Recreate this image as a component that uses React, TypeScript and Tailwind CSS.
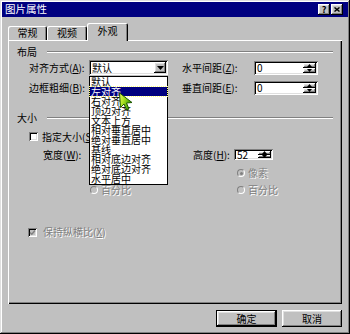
import React from "react";

// Win98-style bevels
const RAISED =
  "shadow-[inset_-1px_-1px_0_#000,inset_1px_1px_0_#fff,inset_-2px_-2px_0_#808080,inset_2px_2px_0_#dfdfdf]";
const SUNKEN =
  "shadow-[inset_1px_1px_0_#808080,inset_-1px_-1px_0_#fff,inset_2px_2px_0_#000,inset_-2px_-2px_0_#dfdfdf]";
const DISABLED = "text-[#808080] [text-shadow:1px_1px_0_#fff]";

const ALIGN_OPTIONS = [
  "默认",
  "左对齐",
  "右对齐",
  "顶边对齐",
  "文本上方",
  "相对垂直居中",
  "绝对垂直居中",
  "基线",
  "相对底边对齐",
  "绝对底边对齐",
  "水平居中",
];

function GroupHeader({ label }: { label: string }) {
  return (
    <div className="flex h-[12px] items-center pl-[9px] pr-[9px]">
      <span className="leading-none">{label}</span>
      <div className="ml-[10px] h-[2px] flex-1 border-t border-b border-t-[#808080] border-b-white" />
    </div>
  );
}

function SpinArrow({ up }: { up?: boolean }) {
  return (
    <div className={`flex w-[13px] flex-1 items-center justify-center bg-[#c0c0c0] ${RAISED}`}>
      <svg width="5" height="3" viewBox="0 0 5 3">
        <path d={up ? "M0 3h5L2.5 0z" : "M0 0h5L2.5 3z"} fill="#000" />
      </svg>
    </div>
  );
}

function SpinBox({ value, className }: { value: string; className: string }) {
  return (
    <div className={`flex items-center bg-white ${SUNKEN} ${className}`}>
      <span className="flex-1 pl-[3px] leading-none">{value}</span>
      <div className="flex h-full flex-col py-[2px] pr-[2px]">
        <SpinArrow up />
        <SpinArrow />
      </div>
    </div>
  );
}

function CheckBox({ checked, disabled }: { checked?: boolean; disabled?: boolean }) {
  return (
    <div
      className={`flex h-[9px] w-[9px] shrink-0 items-center justify-center ${SUNKEN} ${
        disabled ? "bg-[#c0c0c0]" : "bg-white"
      }`}
    >
      {checked && (
        <svg width="7" height="7" viewBox="0 0 7 7">
          <path d="M1 3.5l1.8 1.8L6 1.5" fill="none" stroke={disabled ? "#808080" : "#000"} strokeWidth="1.4" />
        </svg>
      )}
    </div>
  );
}

function Radio({ label, checked }: { label: string; checked?: boolean }) {
  return (
    <div className="flex items-center gap-[3px]">
      <div className="flex h-[8px] w-[8px] items-center justify-center rounded-full border border-[#808080] border-r-white border-b-white bg-[#c0c0c0]">
        {checked && <div className="h-[3px] w-[3px] rounded-full bg-[#808080]" />}
      </div>
      <span className={`leading-none ${DISABLED}`}>{label}</span>
    </div>
  );
}

function Tab({ label, width, selected }: { label: string; width: string; selected?: boolean }) {
  return (
    <div
      className={`flex items-center justify-center rounded-t-[2px] bg-[#c0c0c0] shadow-[inset_1px_1px_0_#fff,inset_-1px_0_0_#000,inset_-2px_0_0_#808080] ${width} ${
        selected ? "relative z-10 -mb-[1px] h-[18px] pb-[2px]" : "h-[14px]"
      }`}
    >
      <span className="leading-none">{label}</span>
    </div>
  );
}

function Cursor() {
  return (
    <svg className="absolute left-[28px] top-[15px] z-20" width="17" height="19" viewBox="0 0 17 19">
      <defs>
        <linearGradient id="cursorFill" x1="0" y1="0" x2="1" y2="0.4">
          <stop offset="0" stopColor="#f0ff60" />
          <stop offset="0.45" stopColor="#a8e020" />
          <stop offset="1" stopColor="#2f9000" />
        </linearGradient>
      </defs>
      <path
        d="M1.5 1 L2.5 15.5 L6 12 L8.5 18 L11 17 L8.5 11 L14 10.5 Z"
        fill="url(#cursorFill)"
        stroke="#1d5a00"
        strokeWidth="1"
        strokeLinejoin="round"
      />
    </svg>
  );
}

export default function App() {
  return (
    <div className="relative h-[334px] w-[350px] overflow-hidden bg-[#c0c0c0] p-[2px] font-['Noto_Sans_CJK_SC','Noto_Sans',sans-serif] text-[10px] text-black shadow-[inset_-1px_-1px_0_#000,inset_1px_1px_0_#dfdfdf,inset_-2px_-2px_0_#808080,inset_2px_2px_0_#fff]">
      {/* title bar */}
      <div className="flex h-[15px] items-center bg-[#000080] pl-[3px] pr-[5px] text-white">
        <span className="flex-1 text-[10.5px] leading-none">图片属性</span>
        <div className="flex gap-[1px]">
          <div className={`flex h-[11px] w-[12px] items-center justify-center bg-[#c0c0c0] text-[9px] font-bold leading-none text-black ${RAISED}`}>
            ?
          </div>
          <div className={`flex h-[11px] w-[12px] items-center justify-center bg-[#c0c0c0] ${RAISED}`}>
            <svg width="6" height="5" viewBox="0 0 6 5">
              <path d="M0.5 0.5l5 4M5.5 0.5l-5 4" stroke="#000" strokeWidth="1.4" />
            </svg>
          </div>
        </div>
      </div>

      {/* tabs */}
      <div className="ml-[6px] mt-[6px] flex h-[17px] items-end">
        <Tab label="常规" width="w-[39px]" />
        <Tab label="视频" width="w-[40px]" />
        <Tab label="外观" width="w-[41px]" selected />
      </div>

      {/* tab panel */}
      <div className="relative ml-[6px] h-[264px] w-[334px] pt-[6px] shadow-[inset_1px_1px_0_#fff,inset_-1px_-1px_0_#000,inset_-2px_-2px_0_#808080]">
        <GroupHeader label="布局" />

        <div className="mt-[2px] flex h-[15px] items-center">
          <span className="ml-[21px] w-[60px] leading-none">
            对齐方式(<u>A</u>):
          </span>
          <div className={`relative flex h-[15px] w-[79px] items-center bg-white pl-[3px] ${SUNKEN}`}>
            <span className="flex-1 leading-none">默认</span>
            <div className={`mr-[2px] flex h-[11px] w-[12px] items-center justify-center bg-[#c0c0c0] ${RAISED}`}>
              <svg width="7" height="4" viewBox="0 0 7 4">
                <path d="M0 0h7L3.5 4z" fill="#000" />
              </svg>
            </div>

            {/* open dropdown list */}
            <div className="absolute left-0 top-[16px] z-10 w-[79px] border border-black bg-white">
              {ALIGN_OPTIONS.map((opt, i) => (
                <div
                  key={opt}
                  className={`flex h-[9.7px] items-center pl-[1px] leading-none ${
                    i === 1 ? "bg-[#000080] text-white outline-1 outline-dotted outline-[#ffff80]" : ""
                  }`}
                >
                  {opt}
                </div>
              ))}
              <Cursor />
            </div>
          </div>
          <span className="ml-[14px] w-[72px] leading-none">
            水平间距(<u>Z</u>):
          </span>
          <SpinBox value="0" className="h-[14px] w-[64px]" />
        </div>

        <div className="mt-[5px] flex h-[15px] items-center">
          <span className="ml-[21px] w-[60px] leading-none">
            边框粗细(<u>B</u>):
          </span>
          <div className={`h-[15px] w-[79px] bg-white ${SUNKEN}`} />
          <span className="ml-[14px] w-[72px] leading-none">
            垂直间距(<u>E</u>):
          </span>
          <SpinBox value="0" className="h-[14px] w-[64px]" />
        </div>

        <div className="mt-[17px]">
          <GroupHeader label="大小" />
        </div>

        <div className="mt-[8px] flex h-[9px] items-center pl-[21px]">
          <CheckBox />
          <span className="ml-[4px] leading-none">
            指定大小(<u>S</u>)
          </span>
        </div>

        <div className="mt-[8px] flex h-[11px] items-center">
          <span className="ml-[35px] w-[46px] leading-none">
            宽度(<u>W</u>):
          </span>
          <div className={`h-[11px] w-[39px] bg-white ${SUNKEN}`} />
          <span className="ml-[65px] w-[41px] leading-none">
            高度(<u>H</u>):
          </span>
          <SpinBox value="52" className="h-[11px] w-[39px]" />
        </div>

        <div className="mt-[8px] flex h-[10px] items-center pl-[82px]">
          <div className="w-[147px]">
            <Radio label="像素" checked />
          </div>
          <Radio label="像素" checked />
        </div>
        <div className="mt-[7px] flex h-[10px] items-center pl-[82px]">
          <div className="w-[147px]">
            <Radio label="百分比" />
          </div>
          <Radio label="百分比" />
        </div>

        <div className="mt-[32px] flex h-[10px] items-center pl-[20px]">
          <CheckBox checked disabled />
          <span className={`ml-[6px] leading-none ${DISABLED}`}>
            保持纵横比(<u>X</u>)
          </span>
        </div>
      </div>

      {/* dialog buttons */}
      <div className="mt-[6px] flex justify-end gap-[5px] pr-[6px]">
        <div className="h-[17px] w-[61px] border border-black">
          <div className={`flex h-full w-full items-center justify-center ${RAISED}`}>
            <span className="leading-none">确定</span>
          </div>
        </div>
        <div className={`flex h-[17px] w-[60px] items-center justify-center ${RAISED}`}>
          <span className="leading-none">取消</span>
        </div>
      </div>
    </div>
  );
}
